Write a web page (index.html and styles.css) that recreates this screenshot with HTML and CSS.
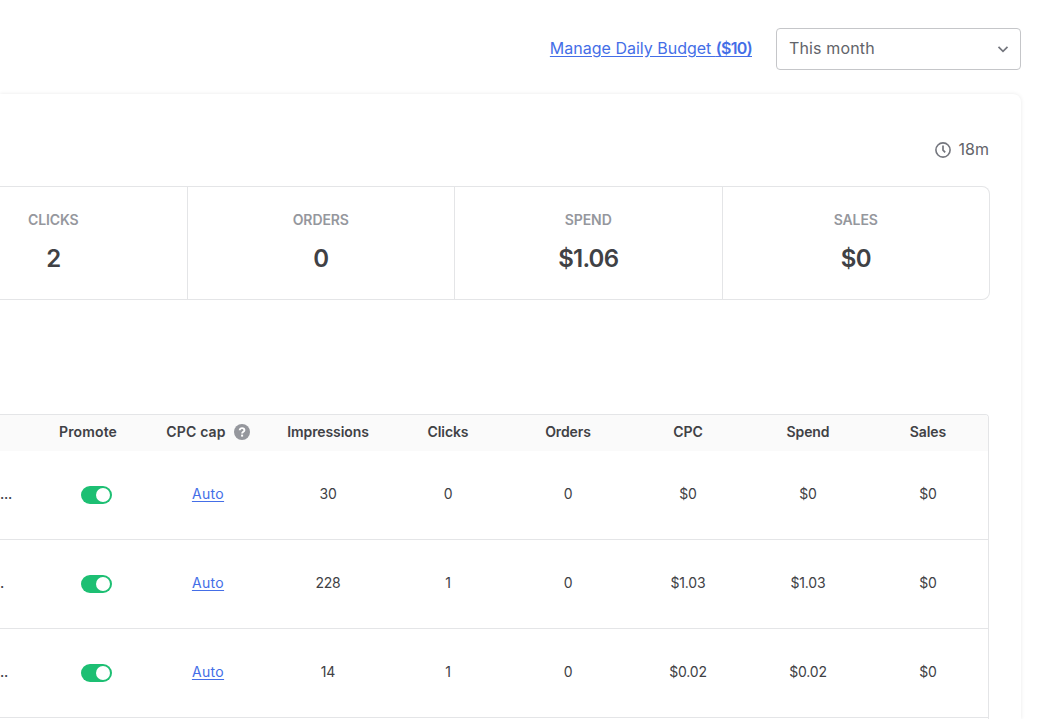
FILE: index.html
```html
<!DOCTYPE html>
<html lang="en">
  <head>
    <meta charset="UTF-8" />
    <meta name="viewport" content="width=device-width, initial-scale=1.0" />
    <title>Promoted Gigs</title>
    <link rel="stylesheet" href="styles.css">
  </head>
  <body>
    <header class="toolbar">
      <a class="budget-link" href="#">Manage Daily Budget <b>($10)</b></a>
      <button class="period-select" type="button">
        <span>This month</span>
        <svg width="12" height="12" viewBox="0 0 12 12">
          <path d="M1.5 3.8 L6 8.3 L10.5 3.8" fill="none" stroke="#74767e" stroke-width="1.7" />
        </svg>
      </button>
    </header>

    <main class="card">
      <div class="updated">
        <svg width="16" height="16" viewBox="0 0 16 16" fill="none" stroke="#74767e">
          <circle cx="8" cy="8" r="7.1" stroke-width="1.6" />
          <path d="M8 3.4 V8.2 L10.2 10.4" stroke-width="1.7" />
        </svg>
        <span>18m</span>
      </div>

      <section class="stats">
        <div class="stat"><h3>CLICKS</h3><p>2</p></div>
        <div class="stat"><h3>ORDERS</h3><p>0</p></div>
        <div class="stat"><h3>SPEND</h3><p>$1.06</p></div>
        <div class="stat"><h3>SALES</h3><p>$0</p></div>
      </section>

      <section class="gigs">
        <div class="row head">
          <span></span>
          <span class="wide">Promote</span>
          <span class="cap wide">CPC cap
            <svg width="16" height="16" viewBox="0 0 16 16">
              <circle cx="8" cy="8" r="8" fill="#95979d" />
              <path d="M5.7 6.3 C5.7 3.4 10.4 3.5 10.4 6.2 C10.4 7.9 8.1 7.8 8.1 9.6" fill="none" stroke="#fff" stroke-width="1.9" />
              <rect x="7.1" y="10.6" width="2" height="2" fill="#fff" />
            </svg>
          </span>
          <span>Impressions</span>
          <span>Clicks</span>
          <span>Orders</span>
          <span>CPC</span>
          <span>Spend</span>
          <span>Sales</span>
        </div>
        <div class="row">
          <span class="name">...</span>
          <span class="switch"></span>
          <a href="#">Auto</a>
          <span>30</span>
          <span>0</span>
          <span>0</span>
          <span>$0</span>
          <span>$0</span>
          <span>$0</span>
        </div>
        <div class="row">
          <span class="name">.</span>
          <span class="switch"></span>
          <a href="#">Auto</a>
          <span>228</span>
          <span>1</span>
          <span>0</span>
          <span>$1.03</span>
          <span>$1.03</span>
          <span>$0</span>
        </div>
        <div class="row">
          <span class="name">..</span>
          <span class="switch"></span>
          <a href="#">Auto</a>
          <span>14</span>
          <span>1</span>
          <span>0</span>
          <span>$0.02</span>
          <span>$0.02</span>
          <span>$0</span>
        </div>
      </section>
    </main>
  </body>
</html>
```
FILE: styles.css
```css
* {
  box-sizing: border-box;
}
body {
  margin: 0;
  height: 719px;
  overflow: hidden;
  background: #fff;
  color: #404145;
  font-family: Inter, "Liberation Sans", sans-serif;
  font-size: 14px;
}
a {
  color: #446ee7;
  text-underline-offset: 2px;
}
.toolbar {
  display: flex;
  justify-content: flex-end;
  align-items: center;
  gap: 24px;
  padding: 28px 20px 0 0;
  height: 70px;
}
.budget-link {
  font-size: 16px;
  line-height: 24px;
  margin-top: -2px;
}
.budget-link b {
  font-weight: 600;
  letter-spacing: -0.7px;
}
.period-select {
  display: flex;
  justify-content: space-between;
  align-items: center;
  width: 245px;
  height: 42px;
  padding: 0 11px 0 12px;
  border: 1px solid #c5c6c9;
  border-radius: 4px;
  background: #fff;
  color: #62646a;
  font-family: inherit;
  font-size: 16px;
  letter-spacing: 0.15px;
}
.period-select span {
  margin-top: -2px;
}

/* summary card */
.card {
  height: 625px;
  margin: 24px 20px 0 0;
  padding: 44px 31px 0 0;
  border-radius: 0 8px 0 0;
  box-shadow: 0 0 4px rgba(0, 0, 0, 0.09);
}
.updated {
  display: flex;
  justify-content: flex-end;
  align-items: center;
  gap: 8px;
  height: 24px;
  margin-right: 1px;
  color: #62646a;
  font-size: 16px;
}
.updated span {
  margin-top: -2px;
}
.stats {
  display: flex;
  justify-content: flex-end;
  height: 114px;
  margin-top: 24px;
  border: 1px solid #e4e5e7;
  border-left: none;
  border-radius: 0 8px 8px 0;
  overflow: hidden;
}
.stat {
  flex: 0 0 267.5px;
  padding-top: 21px;
  text-align: center;
}
.stat:first-child {
  padding-left: 1px;
}
.stat + .stat {
  border-left: 1px solid #e4e5e7;
}
.stat h3 {
  margin: 0;
  color: #95979d;
  font-size: 14px;
  font-weight: 600;
  letter-spacing: -0.1px;
  line-height: 24px;
}
.stat p {
  margin: 10px 0 0;
  font-size: 24px;
  font-weight: 600;
  letter-spacing: -0.8px;
  line-height: 34px;
}

/* gigs table */
.gigs {
  height: 305px;
  margin: 114px 1px 0 0;
  border: 1px solid #e4e5e7;
  border-width: 1px 1px 0 0;
  border-radius: 0 4px 0 0;
  overflow: hidden;
}
.row {
  display: grid;
  grid-template-columns: 28px repeat(8, 120px);
  align-items: center;
  justify-items: center;
  height: 89px;
  padding-bottom: 4px;
  border-bottom: 1px solid #e4e5e7;
  letter-spacing: -0.2px;
}
.row a {
  letter-spacing: 0.35px;
}
.row.head {
  height: 36px;
  padding-bottom: 3px;
  border: none;
  background: #fafafa;
  font-weight: 600;
  letter-spacing: -0.1px;
}
.head .wide {
  letter-spacing: 0.15px;
}
.cap {
  display: flex;
  align-items: center;
  gap: 8px;
}
.cap svg {
  margin-top: 1px;
}
.switch {
  width: 31px;
  height: 18px;
  margin: 4px 0 0 17px;
  padding: 2px 1px 2px 15px;
  border-radius: 9px;
  background: #1dbf73;
}
.switch::before {
  content: "";
  display: block;
  width: 14px;
  height: 14px;
  border-radius: 50%;
  background: #fff;
}
.name {
  justify-self: start;
  font-weight: 500;
}
```
